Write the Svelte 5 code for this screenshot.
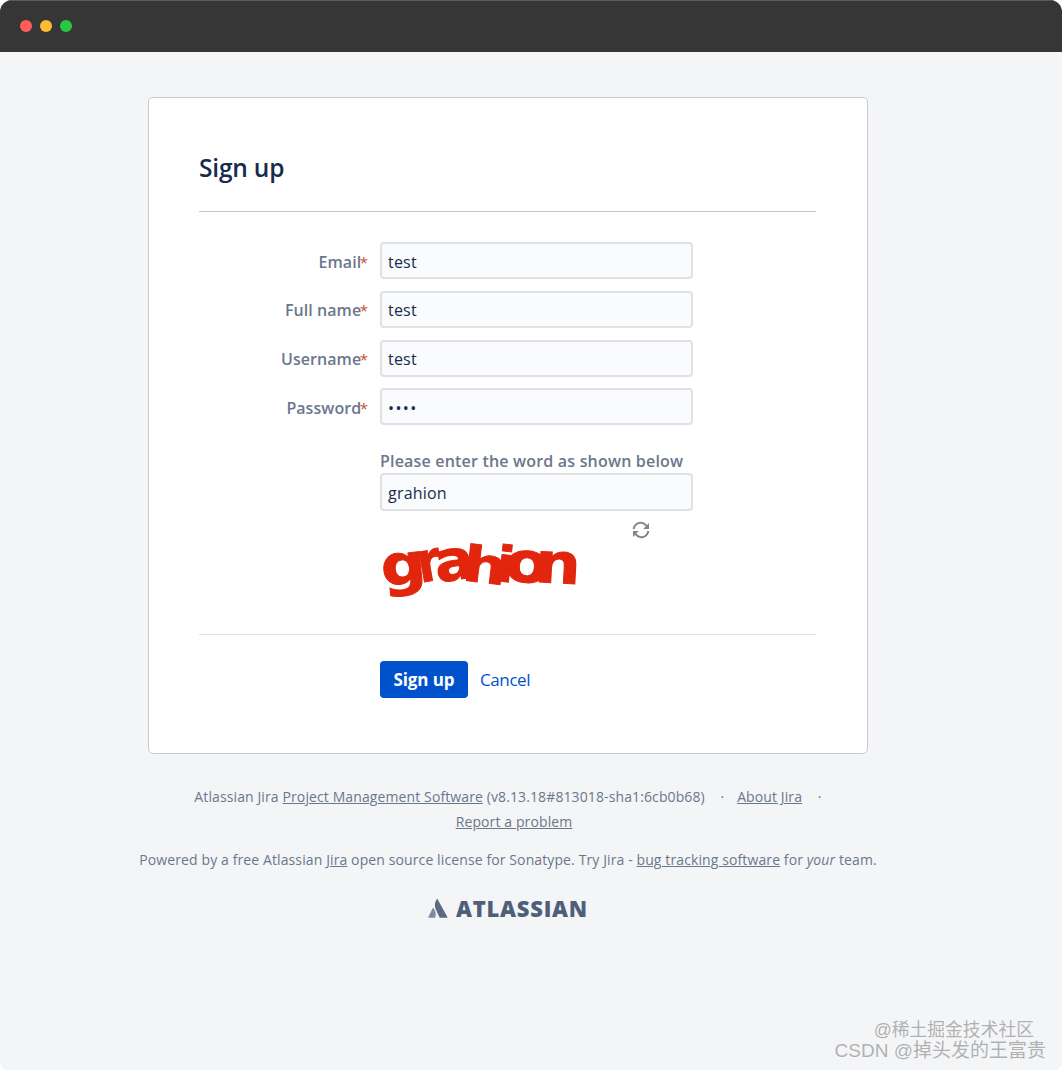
<script>
  const fields = [
    { label: "Email", value: "test", type: "text" },
    { label: "Full name", value: "test", type: "text" },
    { label: "Username", value: "test", type: "text" },
    { label: "Password", value: "test", type: "password" },
  ];

  // captcha letters, each one bent a little like the generated image
  const letters = [
    { c: "g", y: 5, r: -6, w: 1.12, h: 1 },
    { c: "r", y: 2, r: -10, w: 0.85, h: 1 },
    { c: "a", y: 1, r: -8, w: 1.05, h: 1 },
    { c: "h", y: 6, r: 7, w: 1.1, h: 0.88 },
    { c: "i", y: 5, r: 6, w: 0.95, h: 0.88 },
    { c: "o", y: 3, r: 4, w: 1.15, h: 1 },
    { c: "n", y: 4, r: 3, w: 1.15, h: 1 },
  ];
</script>

<div class="window">
  <header class="titlebar">
    <span class="dot red"></span>
    <span class="dot yellow"></span>
    <span class="dot green"></span>
  </header>

  <main class="page">
    <section class="card">
      <h1>Sign up</h1>
      <form class="form" onsubmit={(e) => e.preventDefault()}>
        {#each fields as field}
          <div class="row">
            <label for={field.label}>{field.label}<span class="req">*</span></label>
            <input id={field.label} class="text" type={field.type} value={field.value} />
          </div>
        {/each}

        <div class="captcha">
          <label class="hint" for="captcha">Please enter the word as shown below</label>
          <input id="captcha" class="text tall" type="text" value="grahion" />
          <div class="captcha-image">
            <span class="word">
              {#each letters as l}
                <span class="letter" style="transform: translateY({l.y}px) rotate({l.r}deg) scale({l.w}, {l.h})">{l.c}</span>
              {/each}
            </span>
            <svg class="reload" width="20" height="20" viewBox="0 0 20 20" fill="none">
              <path d="M2.6 9 C3.2 5 6.6 2.4 10.4 2.8 C12.6 3 14.2 4.2 15.4 5.8" stroke="#858585" stroke-width="2" />
              <path d="M18 3 L18 9 L12.2 9 Z" fill="#858585" />
              <path d="M17.4 11 C16.8 15 13.4 17.6 9.6 17.2 C7.4 17 5.8 15.8 4.6 14.2" stroke="#858585" stroke-width="2" />
              <path d="M2 17 L2 11 L7.8 11 Z" fill="#858585" />
            </svg>
          </div>
        </div>

        <div class="actions">
          <button type="submit">Sign up</button>
          <a href="#cancel">Cancel</a>
        </div>
      </form>
    </section>

    <footer class="footer">
      <p class="meta">
        Atlassian Jira <a href="#pm">Project Management Software</a> (v8.13.18#813018-sha1:6cb0b68)
        <span class="sep">·</span>
        <a href="#about">About Jira</a>
        <span class="sep last">·</span>
        <br />
        <a class="report" href="#report">Report a problem</a>
      </p>
      <p class="powered">
        Powered by a free Atlassian <a href="#jira">Jira</a> open source license for Sonatype. Try Jira -
        <a href="#bug">bug tracking software</a> for <em>your</em> team.
      </p>
      <div class="logo">
        <svg width="20" height="20" viewBox="0 0 20 20">
          <path d="M5.6 10.2 C5.3 9.8 4.8 9.9 4.6 10.3 L0.4 18.9 C0.2 19.3 0.5 19.7 0.9 19.7 H6.7 C6.9 19.7 7.1 19.6 7.2 19.4 C8.4 16.9 7.7 13 5.6 10.2 Z" fill="#7f8aa3" />
          <path d="M8.7 1.2 C6.5 4.6 6.4 8.5 7.8 11.4 L11.6 19.4 C11.7 19.6 11.9 19.7 12.1 19.7 H18.9 C19.3 19.7 19.6 19.3 19.4 18.9 L9.6 1.2 C9.4 0.8 8.9 0.8 8.7 1.2 Z" fill="#5c6884" />
        </svg>
        <span>ATLASSIAN</span>
      </div>
    </footer>
  </main>

  <div class="watermark">
    <span>@稀土掘金技术社区</span>
    <span>CSDN @掉头发的王富贵</span>
  </div>
</div>

<style>
  :global(body) {
    margin: 0;
    background: #ffffff;
  }

  .window {
    position: relative;
    height: 1070px;
    background: #f4f5f7;
    border-radius: 12px 12px 8px 8px;
    overflow: hidden;
    font-family: "Open Sans", "Noto Sans", sans-serif;
    color: #172b4d;
  }

  .titlebar {
    display: flex;
    align-items: center;
    gap: 8px;
    height: 52px;
    padding: 0 0 1px 20px;
    box-sizing: border-box;
    background: #363636;
    border-top: 1px solid #5a5a5a;
  }

  .dot {
    width: 12px;
    height: 12px;
    border-radius: 50%;
  }
  .red { background: #ff5f57; }
  .yellow { background: #febc2e; }
  .green { background: #28c840; }

  .page {
    width: 1016px;
    padding-top: 45px;
  }

  .card {
    width: 720px;
    height: 657px;
    box-sizing: border-box;
    margin: 0 auto;
    padding: 0 51px 0 50px;
    background: #ffffff;
    border: 1px solid #c8cacd;
    border-radius: 5px;
  }

  h1 {
    margin: 0;
    height: 114px;
    padding-top: 52px;
    box-sizing: border-box;
    font-size: 24.5px;
    line-height: 36px;
    font-weight: 600;
    letter-spacing: -0.2px;
    color: #172b4d;
    border-bottom: 1px solid #c1c7d0;
  }

  .form {
    padding-top: 30px;
  }

  .row {
    display: flex;
    align-items: center;
    height: 37px;
    margin-bottom: 11.8px;
  }

  .row label {
    width: 169px;
    margin-right: 12px;
    padding-top: 2px;
    text-align: right;
    font-size: 16px;
    font-weight: 600;
    letter-spacing: 0.05px;
    color: #6b778c;
  }

  .req {
    margin-left: -1.5px;
    color: #c9502c;
    font-weight: 400;
    font-size: 15px;
  }

  .text {
    display: block;
    width: 313px;
    height: 37px;
    box-sizing: border-box;
    padding: 2px 6px 0;
    background: #fafbfc;
    border: 2px solid #dfe1e6;
    border-radius: 4px;
    font-family: inherit;
    font-size: 16px;
    letter-spacing: 0.2px;
    color: #172b4d;
    outline: none;
  }

  .text[type="password"] {
    letter-spacing: 1.4px;
  }

  .tall {
    height: 38px;
  }

  .captcha {
    margin-left: 181px;
    margin-top: 24px;
  }

  .hint {
    display: block;
    height: 24px;
    font-size: 16px;
    line-height: 24px;
    font-weight: 600;
    letter-spacing: 0.19px;
    color: #6b778c;
    white-space: nowrap;
  }

  .captcha-image {
    position: relative;
    height: 123px;
    border-bottom: 1px solid #dfe1e6;
    margin-left: -181px;
  }

  .word {
    position: absolute;
    left: 184px;
    top: 17px;
    display: flex;
    font-family: "DejaVu Sans", sans-serif;
    font-size: 56px;
    line-height: 64px;
    font-weight: 700;
    color: #e1260d;
    -webkit-text-stroke: 1px #e1260d;
  }

  .letter {
    display: inline-block;
    margin-right: -8px;
  }

  .reload {
    position: absolute;
    left: 432px;
    top: 9px;
  }

  .actions {
    display: flex;
    align-items: center;
    gap: 12px;
    margin: 26px 0 0 181px;
  }

  button {
    width: 88px;
    height: 37px;
    padding: 0;
    border: none;
    border-radius: 4px;
    background: #0052cc;
    color: #ffffff;
    font-family: inherit;
    font-size: 17px;
    font-weight: 700;
    letter-spacing: -0.1px;
  }

  .actions a {
    font-size: 17px;
    letter-spacing: -0.4px;
    color: #0052cc;
    text-decoration: none;
  }

  .footer {
    width: 760px;
    margin: 0 auto;
    padding-top: 30px;
    text-align: center;
    font-size: 14px;
    line-height: 25px;
    letter-spacing: 0.11px;
    color: #6b778c;
  }

  .footer p {
    margin: 0;
  }

  .footer a {
    color: #6b778c;
    text-decoration: underline;
  }

  .footer a.report {
    margin-left: 12px;
  }

  .meta .sep {
    margin: 0 9px 0 12px;
  }
  .meta .last {
    margin: 0 0 0 12px;
  }

  .powered {
    padding-top: 13px;
    white-space: nowrap;
  }

  .logo {
    display: flex;
    align-items: center;
    justify-content: center;
    gap: 8px;
    margin-top: 24px;
    color: #505f79;
  }

  .logo span {
    font-family: "Open Sans", sans-serif;
    font-size: 22px;
    line-height: 24px;
    font-weight: 800;
    letter-spacing: 0.75px;
  }

  .watermark {
    position: absolute;
    right: 16px;
    bottom: 6px;
    display: flex;
    flex-direction: column;
    align-items: flex-end;
    font-family: "Liberation Sans", "Noto Sans CJK SC", sans-serif;
    font-size: 19px;
    line-height: 27px;
    color: rgba(130, 130, 130, 0.6);
  }

  .watermark span:first-child {
    margin: 0 12px -2px 0;
    font-size: 17.8px;
    line-height: 18px;
  }
</style>
